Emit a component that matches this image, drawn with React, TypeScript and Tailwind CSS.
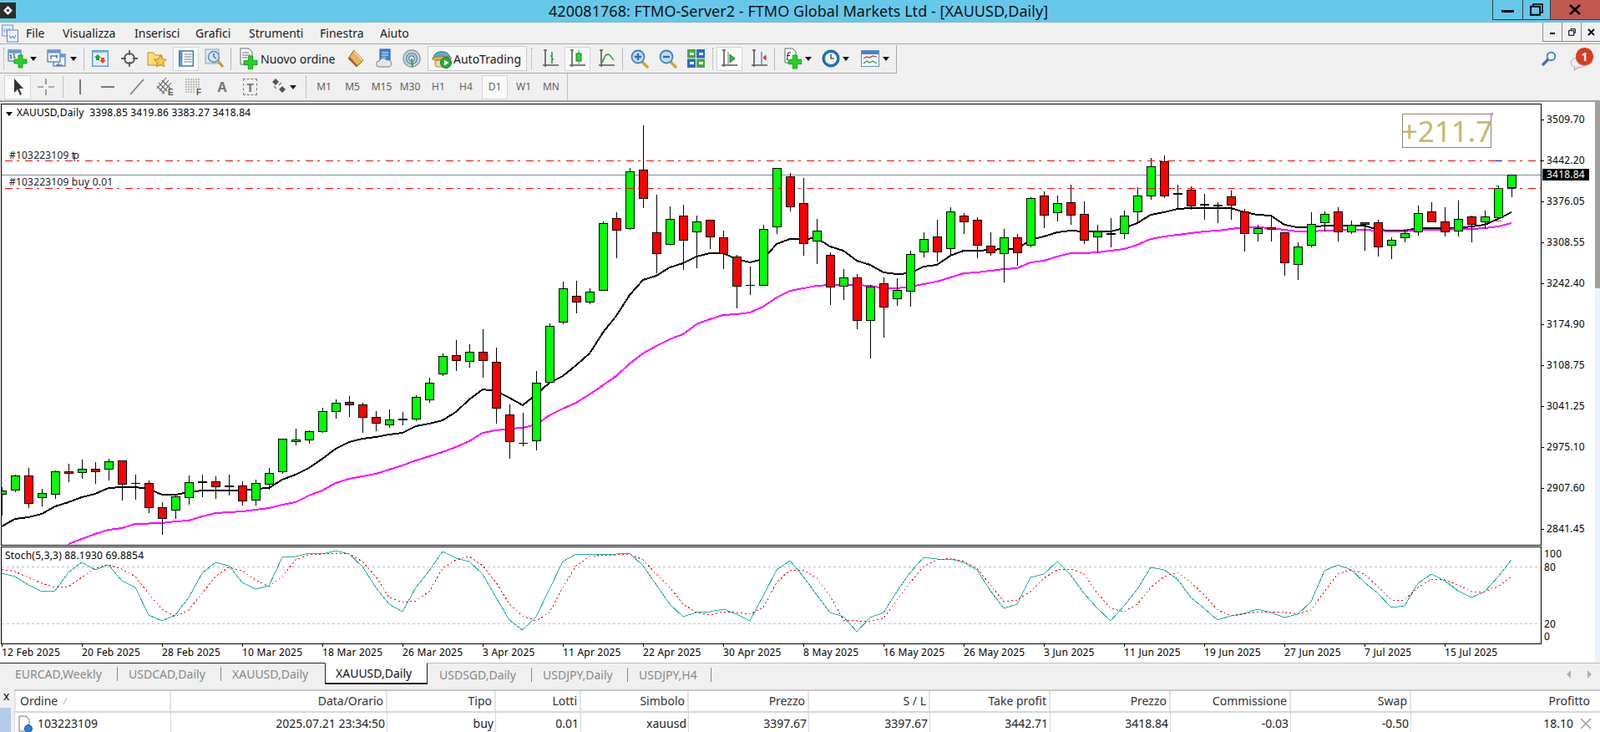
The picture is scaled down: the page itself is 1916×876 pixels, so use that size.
import React from "react";

type K = [string, number, number, number, number];
const candles: K[] = [
  ["g",587,592,583,617],["g",569,587,568,589],["r",569,603,560,608],["g",590,596,585,606],["g",564,592,563,597],["r",564,567,555,577],["g",561,566,550,573],["r",561,565,553,579],
  ["g",552,562,549,575],["r",551,580,551,599],["d",578,579,568,598],["r",578,608,575,614],["r",607,621,601,640],["g",594,611,592,621],["g",577,596,569,604],["d",576,578,568,595],
  ["r",576,583,570,597],["d",581,583,568,593],["r",581,600,576,605],["g",578,599,574,605],["g",566,580,560,586],["g",525,565,525,567],["g",526,529,513,533],["g",516,527,515,531],
  ["g",492,517,488,518],["g",482,493,478,501],["r",481,485,474,499],["r",484,500,482,518],["r",499,507,492,516],["g",502,509,490,512],["d",501,503,493,509],["g",475,502,473,504],
  ["g",458,479,452,482],["g",426,448,423,450],["r",425,432,407,444],["g",421,433,412,440],["r",421,432,394,452],["r",433,489,416,507],["r",496,529,484,549],["d",530,531,494,534],
  ["g",458,528,444,539],["g",390,458,387,459],["g",345,386,337,388],["r",354,362,336,375],["g",349,362,345,364],["g",267,348,265,348],["r",261,276,254,309],["g",205,274,201,275],
  ["r",203,238,150,249],["r",278,304,233,327],["g",262,293,247,294],["r",258,288,245,323],["g",265,278,258,321],["r",263,284,263,298],["r",284,304,276,322],["r",307,343,305,369],
  ["d",341,342,319,353],["g",274,342,269,342],["g",201,272,201,280],["r",211,248,207,253],["r",243,292,213,306],["g",276,289,262,316],["r",305,344,302,365],["g",332,343,322,359],
  ["r",332,384,328,394],["g",343,384,341,429],["r",339,368,332,404],["g",347,358,333,366],["g",304,349,300,367],["g",286,302,278,308],["r",283,302,263,313],["g",253,298,248,306],
  ["r",258,266,255,280],["r",263,294,260,309],["r",294,303,278,306],["g",284,304,274,338],["r",284,303,280,318],["g",237,294,236,296],["r",234,258,229,273],["g",243,255,234,265],
  ["r",242,258,221,269],["r",256,288,241,292],["g",277,284,269,302],["d",279,281,261,296],["g",258,280,252,286],["g",234,254,224,267],["g",199,235,189,239],["r",193,235,186,237],
  ["d",231,233,221,249],["r",227,247,223,251],["d",244,246,232,263],["d",245,247,242,267],["r",235,246,228,263],["r",253,280,250,301],["g",273,280,269,289],["r",272,275,260,289],
  ["r",278,315,278,330],["g",295,317,290,335],["g",268,294,254,296],["g",256,267,253,277],["r",253,278,248,289],["g",269,278,264,280],["r",266,269,266,300],["r",266,296,263,307],
  ["g",287,294,284,310],["g",279,285,274,290],["g",255,278,246,282],["r",253,266,242,266],["r",265,278,248,283],["g",262,277,240,283],["r",259,269,258,290],["g",259,266,252,273],
  ["g",225,261,222,262],["g",209,225,209,236],
];
const black = [630,621,619,615,606,601,595,591,584,583,583,585,592,592,589,587,587,587,587,585,584,574,568,560,549,537,529,525,523,520,518,510,507,503,493,478,466,468,476,485,472,458,450,437,423,398,378,353,335,330,320,315,307,303,303,310,314,310,292,286,286,285,295,300,312,317,326,328,327,319,317,306,300,300,299,298,298,287,283,278,276,277,277,277,273,267,257,254,250,249,249,249,249,254,257,258,269,272,272,270,270,270,270,275,276,276,273,273,273,273,271,269,262,254];
const magenta = [651,645,639,634,632,627,626.5,626,624,623,618,614,613,612,610,608,604,601,593,587,578,573,570,567,562,557,551,546,541,535,528,518,515,513,512,508,497,489,482,472,461,450,435,423,414,406,400,388,382,377,376,374,367,356,348,345,342,341,341,341,342,345,345,343,340,337,332,327,326,324,322,321,314,312,307,303,303,302,300,298,293,286,283,281,279,277,276,274,272,272,273,275,277,277,276,275.5,275,275,276,277,277,275,275,275,274,274,273,271,267];
const teal = [686,690,700,708,707,685,673,682,676,695,703,736,743,736,715,686,673,677,697,705,701,667,666,662,663,659,663,678,703,723,732,703,683,660,668,672,687,715,742,754,738,705,672,663,664,663,663,662,677,700,723,738,733,732,729,735,743,713,682,671,690,712,733,738,756,739,733,708,685,667,669,669,673,682,707,728,723,691,687,672,688,710,728,743,725,705,679,682,693,715,728,742,737,734,729,733,739,735,720,683,676,682,697,710,727,725,698,687,695,707,715,708,690,670];
const redS = [681,684,691,698,703,702,691,680,676,681,690,710,729,738,730,710,690,679,683,694,702,690,670,664,663,662,663,672,690,715,721,719,708,680,670,666,677,697,723,737,743,733,703,677,666,664,664,663,670,687,703,723,733,736,732,733,735,727,697,682,682,692,713,742,743,743,740,718,697,678,670,668,672,680,700,720,718,708,692,682,681,687,710,728,732,723,703,690,685,697,712,730,737,735,732,732,733,735,730,708,687,682,687,702,718,718,703,693,694,700,708,708,702,690];
const pts = (a: number[], from = 0) => a.map((y, i) => `${2 + 16 * (i + from)},${y}`).join(" ");
const axis = ["3509.70","3442.20","3376.05","3308.55","3242.40","3174.90","3108.75","3041.25","2975.10","2907.60","2841.45"];
const dates = ["12 Feb 2025","20 Feb 2025","28 Feb 2025","10 Mar 2025","18 Mar 2025","26 Mar 2025","3 Apr 2025","11 Apr 2025","22 Apr 2025","30 Apr 2025","8 May 2025","16 May 2025","26 May 2025","3 Jun 2025","11 Jun 2025","19 Jun 2025","27 Jun 2025","7 Jul 2025","15 Jul 2025"];
const dj = "font-['Open_Sans',sans-serif] text-[12px] tracking-[0.2px] leading-[14px]";

const Caret = ({ c = "" }: { c?: string }) => (
  <svg width="8" height="5" viewBox="0 0 8 5" className={c}><path d="M0 0h8L4 5z" fill="#111" /></svg>
);
const Plus = ({ x, y, s = 12 }: { x: number; y: number; s?: number }) => (
  <path d={`M${x + s / 3} ${y}h${s / 3}v${s / 3}h${s / 3}v${s / 3}h${-s / 3}v${s / 3}h${-s / 3}v${-s / 3}h${-s / 3}v${-s / 3}h${s / 3}z`} fill="#22d322" stroke="#128a12" strokeWidth="0.8" />
);
const Axes = ({ children }: { children?: React.ReactNode }) => (
  <svg width="20" height="24" viewBox="0 0 20 24">
    <path d="M3 2v18M0 20h19M5 2H1M3 22v-2" stroke="#5a5a5a" strokeWidth="1.6" fill="none" />
    {children}
  </svg>
);
const Win = ({ x, y, w, h }: { x: number; y: number; w: number; h: number }) => (
  <g>
    <rect x={x} y={y} width={w} height={h} fill="#eef5fc" stroke="#3f78b8" strokeWidth="1.2" />
    <rect x={x + 0.6} y={y + 0.6} width={w - 1.2} height="3" fill="#5a96d6" />
  </g>
);

const NewChart = () => (
  <svg width="24" height="24" viewBox="0 0 24 24">
    <Win x={1} y={2} w={15} h={13} />
    <path d="M4 7v6M2.5 8.5H4M4 11h1.5M8 6v6M6.5 7H8M8 10.5h1.5" stroke="#446" strokeWidth="1" fill="none" />
    <Plus x={8} y={8} s={15} />
  </svg>
);
const Profiles = () => (
  <svg width="24" height="24" viewBox="0 0 24 24">
    <Win x={8} y={7} w={14} h={14} />
    <Win x={1} y={2} w={15} h={14} />
    <path d="M4 9h9M5 9v4M12 8v4M11 20h8M14 17v3" stroke="#446" strokeWidth="1" fill="none" />
  </svg>
);
const Market = () => (
  <svg width="20" height="24" viewBox="0 0 20 24">
    <rect x="0.7" y="2.7" width="18.6" height="18.6" fill="#e6f1fb" stroke="#5e9ad8" strokeWidth="1.4" />
    <rect x="1" y="3" width="18" height="2" fill="#7fb4e6" />
    <path d="M7 7l4 4H9v3H5v-3H3z" fill="#1fa52b" />
    <path d="M13 18l-4-4h2v-3h4v3h2z" fill="#e2502e" />
  </svg>
);
const Nav = () => (
  <svg width="20" height="24" viewBox="0 0 20 24">
    <circle cx="10" cy="12" r="6" fill="#eee" stroke="#5a5a5a" strokeWidth="1.8" />
    <path d="M10 2v6M10 16v6M0 12h6M14 12h6" stroke="#5a5a5a" strokeWidth="1.8" />
  </svg>
);
const Folder = () => (
  <svg width="24" height="24" viewBox="0 0 24 24">
    <path d="M1 5h7l2 3h8v12H1z" fill="#fbdc7c" stroke="#b8912c" />
    <path d="M16 8l2.3 4.6 5 .7-3.6 3.5.9 5-4.6-2.4-4.6 2.4.9-5-3.6-3.5 5-.7z" fill="#f6c945" stroke="#a07a18" strokeWidth="0.8" />
  </svg>
);
const Terminal = () => (
  <svg width="18" height="24" viewBox="0 0 18 24">
    <rect x="0.7" y="3" width="16.6" height="18" fill="#fff" stroke="#2f6fb5" strokeWidth="1.4" />
    <rect x="1" y="3.5" width="3.5" height="17" fill="#5d9ad6" />
    <path d="M6.5 7h9M6.5 10h9M6.5 13h9M6.5 16h9" stroke="#6a7684" strokeWidth="1" />
    <path d="M2 7h2M2 10h2M2 13h2" stroke="#d2332a" strokeWidth="1" />
  </svg>
);
const Tester = () => (
  <svg width="24" height="26" viewBox="0 0 24 26">
    <rect x="1" y="2" width="16" height="17" fill="#dce7f2" stroke="#8aa2b8" />
    <circle cx="11" cy="11" r="6.5" fill="#cfe3f5" stroke="#5d88ad" strokeWidth="1.4" />
    <path d="M11 7v4l3 2" stroke="#234" strokeWidth="1" fill="none" />
    <path d="M16 16l6 7" stroke="#c59a2e" strokeWidth="3" />
  </svg>
);
const NewOrder = () => (
  <svg width="22" height="26" viewBox="0 0 22 26">
    <path d="M1 1h10l4 4v15H1z" fill="#fff" stroke="#666" />
    <path d="M3 6h8M3 9h10M3 12h6" stroke="#666" strokeWidth="1" />
    <Plus x={5} y={10} s={16} />
  </svg>
);
const Book = () => (
  <svg width="22" height="24" viewBox="0 0 22 24">
    <path d="M9 2l11 12-8 8L2 12z" fill="#e9b45a" stroke="#8a5a1c" />
    <path d="M2 12l10 10 1-2L4 10z" fill="#a8692a" />
    <path d="M9 3l10 11" stroke="#f6dfa8" strokeWidth="1.5" />
  </svg>
);
const CloudI = () => (
  <svg width="20" height="24" viewBox="0 0 20 24">
    <rect x="5" y="1" width="12" height="14" fill="#3d86d6" stroke="#1d5ba0" />
    <path d="M7 5h8M7 8h8M7 11h5" stroke="#d8ecff" strokeWidth="1.2" />
    <path d="M4 22a3.5 3.5 0 0 1 0-7 5 5 0 0 1 9-1 4 4 0 0 1 3 8z" fill="#e6e6e6" stroke="#777" />
  </svg>
);
const Signal = () => (
  <svg width="22" height="24" viewBox="0 0 22 24">
    <circle cx="11" cy="12" r="10" fill="#d4dde4" stroke="#8b98a3" strokeWidth="1.4" />
    <circle cx="11" cy="12" r="6.6" fill="#b8c9d8" stroke="#5e8fb8" strokeWidth="1.4" />
    <circle cx="11" cy="12" r="3.2" fill="#eef4f9" stroke="#4f7da5" strokeWidth="1.2" />
    <path d="M11 12l1 10" stroke="#3aa042" strokeWidth="2" />
  </svg>
);
const Auto = () => (
  <svg width="24" height="26" viewBox="0 0 24 26">
    <path d="M2 12c1-9 17-10 20-1z" fill="#5fa4dc" stroke="#2e6ea8" />
    <path d="M0 13c6-3 18-3 24-1l-2 3H2z" fill="#e8b73a" stroke="#96731c" strokeWidth="0.8" />
    <rect x="4" y="15" width="12" height="8" rx="3" fill="#f0d8a8" stroke="#96731c" strokeWidth="0.8" />
    <circle cx="17" cy="18" r="6.5" fill="#1fb03a" stroke="#0d7a22" />
    <path d="M15 14.5l5.5 3.5-5.5 3.5z" fill="#fff" />
  </svg>
);
const ZoomI = ({ minus }: { minus?: boolean }) => (
  <svg width="22" height="24" viewBox="0 0 22 24">
    <path d="M13 15l7 7" stroke="#d2a72e" strokeWidth="3.6" strokeLinecap="round" />
    <circle cx="9" cy="10" r="7.5" fill="#bcdcf5" stroke="#3f82bd" strokeWidth="1.8" />
    <path d={minus ? "M5 10h8" : "M5 10h8M9 6v8"} stroke="#2f6fa8" strokeWidth="2.4" />
  </svg>
);
const Tile = () => (
  <svg width="21" height="22" viewBox="0 0 21 22">
    <rect x="0" y="0" width="10" height="10.5" fill="#49a844" />
    <rect x="11" y="0" width="10" height="10.5" fill="#2d66c8" />
    <rect x="0" y="11.5" width="10" height="10.5" fill="#2d66c8" />
    <rect x="11" y="11.5" width="10" height="10.5" fill="#49a844" />
    <path d="M3 4h5v3H3zM14 4h5v3h-5zM3 15h5v3H3zM14 15h5v3h-5z" fill="#e8f4ea" />
  </svg>
);
const Indic = () => (
  <svg width="22" height="26" viewBox="0 0 22 26">
    <path d="M2 1h9l4 4v13H2z" fill="#fff" stroke="#666" />
    <path d="M9 6H7c-1 0-1.4.7-1.6 2l-1 7M4 9.5h4" stroke="#222" strokeWidth="1.1" fill="none" />
    <Plus x={6} y={9} s={16} />
  </svg>
);
const Clock = () => (
  <svg width="22" height="24" viewBox="0 0 22 24">
    <circle cx="11" cy="12" r="10" fill="#2474c4" stroke="#14508e" />
    <circle cx="11" cy="12" r="7" fill="#f2f6fa" />
    <path d="M11 7v5h4" stroke="#223" strokeWidth="1.2" fill="none" />
  </svg>
);
const Tmpl = () => (
  <svg width="22" height="22" viewBox="0 0 22 22">
    <rect x="0.5" y="1.5" width="21" height="19" fill="#f3f8fc" stroke="#5d8fc0" />
    <rect x="1" y="2" width="20" height="4" fill="#3f84c8" />
    <path d="M3 11l4-2 3 1 4-2 5 1" stroke="#c0392b" strokeWidth="1.2" fill="none" />
    <path d="M3 17l4-3 3 2 4-2 5 3" stroke="#2e9e44" strokeWidth="1.2" fill="none" />
  </svg>
);
const Search = () => (
  <svg width="18" height="18" viewBox="0 0 18 18">
    <path d="M8 10l-6 6" stroke="#3d6dc0" strokeWidth="3.2" strokeLinecap="round" />
    <circle cx="11.5" cy="6.5" r="4.8" fill="#fff" stroke="#4a83d0" strokeWidth="2" />
  </svg>
);

const Dots = ({ c }: { c: string }) => <div className={`w-[2px] h-[26px] border-l border-dotted border-[#999] ${c}`} />;
const Sep = ({ c }: { c: string }) => <div className={`w-px h-[27px] bg-[#b8b8b8] ${c}`} />;
const Pressed = ({ c, children }: { c: string; children: React.ReactNode }) => (
  <div className={`h-[29px] w-[31px] flex items-center justify-center bg-[#fafafa] border border-[#d4d4d4] ${c}`}>{children}</div>
);
const TF = ({ t, c }: { t: string; c: string }) => (
  <span className={`text-[#5f5f5f] text-center font-['Open_Sans',sans-serif] text-[12px] ${c}`}>{t}</span>
);

const tabs = [
  { t: "EURCAD,Weekly", c: "pl-[18px] w-[141px] border-r" },
  { t: "USDCAD,Daily", c: "pl-[13px] w-[124px] border-r" },
  { t: "XAUUSD,Daily", c: "pl-[13px] w-[124px]" },
];
const tabs2 = [
  { t: "USDSGD,Daily", c: "pl-[14px] w-[125px] border-r" },
  { t: "USDJPY,Daily", c: "pl-[13px] w-[115px] border-r" },
  { t: "USDJPY,H4", c: "pl-[13px] w-[100px] border-r" },
];
const headers = ["Data/Orario","Tipo","Lotti","Simbolo","Prezzo","S / L","Take profit","Prezzo","Commissione","Swap"];
const values = ["2025.07.21 23:34:50","buy","0.01","xauusd","3397.67","3397.67","3442.71","3418.84","-0.03","-0.50"];
const grid = "grid grid-cols-[188px_259px_130px_102px_129px_144px_145px_144px_144px_144px_144px_226px]";

export default function App() {
  return (
    <div className="w-[1916px] h-[876px] overflow-hidden flex flex-col bg-[#f0f0f0] text-[#1a1a1a] font-['Open_Sans',sans-serif]">
      {/* Title bar */}
      <div className="h-[27px] shrink-0 flex items-start bg-[#65c8eb] border-b border-[#8ab4c8]">
        <div className="mt-[3px] w-[19px] h-[19px] bg-[#2b2b2b] flex items-center justify-center">
          <svg width="11" height="11" viewBox="0 0 11 11"><path d="M5.5 0L11 5.5 5.5 11 0 5.5z" fill="#fff" /><path d="M5.5 3.5l2 2-2 2-2-2z" fill="#2b2b2b" /></svg>
        </div>
        <span className="ml-[638px] w-[600px] text-[18px] tracking-[0.04px] leading-[26px] whitespace-nowrap text-[#111]">420081768: FTMO-Server2 - FTMO Global Markets Ltd - [XAUUSD,Daily]</span>
        <div className="ml-auto flex h-[24px] border-l border-b border-[#2f3e46]">
          <div className="w-[36px] flex items-center justify-center border-r border-[#2f3e46]"><div className="w-[15px] h-[3px] mt-[3px] bg-black" /></div>
          <div className="w-[33px] flex items-center justify-center border-r border-[#2f3e46]">
            <svg width="16" height="15" viewBox="0 0 16 15"><path d="M4 3V1h11v10h-3" fill="none" stroke="#000" strokeWidth="1.6" /><rect x="1" y="3.8" width="11" height="10" fill="none" stroke="#000" strokeWidth="2" /></svg>
          </div>
          <div className="w-[59px] flex items-center justify-center bg-[#c0584f] border-r border-[#c0584f]">
            <svg width="14" height="13" viewBox="0 0 14 13"><path d="M1 1l12 11M13 1L1 12" stroke="#000" strokeWidth="2.6" /></svg>
          </div>
        </div>
      </div>
      {/* Menu */}
      <div className="h-[26px] shrink-0 flex items-center border-b border-[#a8a8a8] text-[14px]">
        <svg width="20" height="22" viewBox="0 0 20 22" className="ml-[2px]">
          <rect x="0.5" y="1" width="13" height="13" fill="#dfeafa" stroke="#6f93cc" />
          <rect x="6.5" y="7" width="13" height="14" fill="#eef4fd" stroke="#5b85c4" />
          <path d="M9 13l2 4 2-3 2 3 2-4" stroke="#4f7cc0" strokeWidth="1" fill="none" />
          <path d="M3 5v5M6 5v5M9 5v2" stroke="#6f93cc" strokeWidth="1" />
        </svg>
        <span className="ml-[9px] w-[44px]">File</span>
        <span className="w-[86px]">Visualizza</span>
        <span className="w-[73px]">Inserisci</span>
        <span className="w-[64px]">Grafici</span>
        <span className="w-[85px]">Strumenti</span>
        <span className="w-[72px]">Finestra</span>
        <span>Aiuto</span>
        <div className="ml-auto flex h-[23px] self-start border-l border-b border-[#8a8a8a]">
          <div className="w-[23px] flex items-center justify-center border-r border-[#8a8a8a]"><div className="w-[6px] h-[2px] mt-[3px] bg-black" /></div>
          <div className="w-[23px] flex items-center justify-center border-r border-[#8a8a8a]">
            <svg width="9" height="9" viewBox="0 0 9 9"><path d="M3 2V.7h5.3v4.6H7" fill="none" stroke="#000" /><rect x="0.7" y="2.7" width="6" height="5.6" fill="none" stroke="#000" /></svg>
          </div>
          <div className="w-[22px] flex items-center justify-center">
            <svg width="9" height="9" viewBox="0 0 9 9"><path d="M1 1l7 7M8 1L1 8" stroke="#000" strokeWidth="1.8" /></svg>
          </div>
        </div>
      </div>
      {/* Toolbar 1 */}
      <div className="h-[35px] shrink-0 flex items-center relative">
        <div className="flex items-center h-[34px] w-[1074px] shrink-0 border-r border-b border-[#a8a8a8]">
          <Dots c="ml-[4px]" />
          <div className="ml-[3px]"><NewChart /></div>
          <Caret c="ml-[3px]" />
          <div className="ml-[12px]"><Profiles /></div>
          <Caret c="ml-[4px]" />
          <Sep c="ml-[8px]" />
          <div className="ml-[9px]"><Market /></div>
          <div className="ml-[15px]"><Nav /></div>
          <div className="ml-[11px]"><Folder /></div>
          <Pressed c="ml-[7px]"><Terminal /></Pressed>
          <div className="ml-[7px]"><Tester /></div>
          <Sep c="ml-[7px]" />
          <div className="ml-[10px]"><NewOrder /></div>
          <span className="ml-[3px] w-[92px] text-[14px] whitespace-nowrap">Nuovo ordine</span>
          <div className="ml-[11px]"><Book /></div>
          <div className="ml-[13px]"><CloudI /></div>
          <div className="ml-[12px]"><Signal /></div>
          <div className="ml-[8px] w-[119px] h-[30px] flex items-center bg-[#f7f7f7] border border-[#c8c8c8] pl-[4px] shrink-0">
            <Auto />
            <span className="ml-[2px] text-[14px] whitespace-nowrap">AutoTrading</span>
          </div>
          <Dots c="ml-[5px]" />
          <div className="ml-[12px]">
            <Axes><path d="M11 4v14M9 9h2M11 13h2" stroke="#2ca02c" strokeWidth="1.6" fill="none" /></Axes>
          </div>
          <Pressed c="ml-[6px]">
            <Axes><path d="M11 2v17" stroke="#2a6" strokeWidth="1" /><rect x="8" y="6" width="6" height="9" fill="#33d633" stroke="#1a7a1a" /></Axes>
          </Pressed>
          <div className="ml-[10px]">
            <Axes><path d="M4 17c3-7 4-10 7-10s4 4 7 7" stroke="#3a9a44" strokeWidth="1.6" fill="none" /></Axes>
          </div>
          <Sep c="ml-[8px]" />
          <div className="ml-[9px]"><ZoomI /></div>
          <div className="ml-[12px]"><ZoomI minus /></div>
          <div className="ml-[12px]"><Tile /></div>
          <Dots c="ml-[9px]" />
          <Pressed c="ml-[3px]">
            <Axes><path d="M10 7l6 5-6 5z" fill="#37b24a" stroke="#228a33" /><path d="M8 4v16" stroke="#777" strokeWidth="1" /></Axes>
          </Pressed>
          <div className="ml-[11px]">
            <Axes><path d="M12 4v16" stroke="#4a88c8" strokeWidth="1.4" /><path d="M18 11h-4M14 11l3-3v6z" fill="#d2442a" stroke="#d2442a" /></Axes>
          </div>
          <Sep c="ml-[7px]" />
          <div className="ml-[10px]"><Indic /></div>
          <Caret c="ml-[4px]" />
          <div className="ml-[12px]"><Clock /></div>
          <Caret c="ml-[3px]" />
          <div className="ml-[14px]"><Tmpl /></div>
          <Caret c="ml-[4px]" />
        </div>
        <div className="absolute left-[1846px] top-[8px]"><Search /></div>
        <svg width="26" height="24" viewBox="0 0 26 24" className="absolute left-[1879px] top-[8px]">
          <ellipse cx="11" cy="14" rx="9" ry="6" fill="#eee" stroke="#aaa" />
          <path d="M7 19l-1 4 5-3" fill="#eee" stroke="#aaa" />
        </svg>
        <div className="absolute left-[1887px] top-[4px] w-[21px] h-[21px] rounded-full bg-[#dc3a1e] text-white text-[14px] font-bold leading-[21px] text-center shadow-[0_1px_1px_#999]">1</div>
      </div>
      {/* Toolbar 2 */}
      <div className="h-[34px] shrink-0 flex items-center border-b-2 border-[#a0a0a0]">
        <div className="flex items-center h-[32px] w-[680px] shrink-0 border-r border-[#c0c0c0]">
          <Pressed c="ml-[5px] w-[32px]">
            <svg width="14" height="22" viewBox="0 0 14 22"><path d="M3 1v17l4-4 3 7 2-1-3-7h5z" fill="#333" /></svg>
          </Pressed>
          <svg width="20" height="20" viewBox="0 0 20 20" className="ml-[8px]"><path d="M10 0v7M10 13v7M0 10h7M13 10h7" stroke="#666" strokeWidth="1.2" /></svg>
          <div className="w-px h-[26px] bg-[#c0c0c0] ml-[10px]" />
          <div className="w-[2px] h-[18px] bg-[#777] ml-[19px]" />
          <div className="w-[16px] h-[2px] bg-[#777] ml-[24px]" />
          <svg width="18" height="20" viewBox="0 0 18 20" className="ml-[18px]"><path d="M1 19L17 1" stroke="#777" strokeWidth="1.5" /></svg>
          <svg width="22" height="24" viewBox="0 0 22 24" className="ml-[14px]">
            <path d="M1 14L12 1M4 17L15 4M7 20L18 7M3 7l10 10M1 11l9 9M7 4l10 10" stroke="#666" strokeWidth="1.1" />
            <text x="14" y="22" fontSize="10" fontWeight="700" fill="#555" fontFamily="Liberation Sans">E</text>
          </svg>
          <svg width="20" height="24" viewBox="0 0 20 24" className="ml-[13px]">
            <path d="M0 3h17M0 6h17M0 9h17M0 12h17M0 15h12M0 18h12" stroke="#888" strokeWidth="1" strokeDasharray="2 1" />
            <text x="13" y="22" fontSize="10" fontWeight="700" fill="#555" fontFamily="Liberation Sans">F</text>
          </svg>
          <span className="ml-[18px] w-[12px] text-[16px] font-bold text-[#777] text-center font-['Liberation_Sans',sans-serif]">A</span>
          <div className="ml-[19px] w-[17px] h-[20px] border border-dashed border-[#777] flex items-center justify-center text-[15px] font-bold text-[#777] font-['Liberation_Sans',sans-serif]">T</div>
          <svg width="20" height="20" viewBox="0 0 20 20" className="ml-[16px]">
            <path d="M6 0l4 4-4 4-4-4z" fill="#555" /><path d="M14 9l4 4-4 4-4-4z" fill="#555" /><path d="M4 9l3 3M13 5l-3 3" stroke="#777" strokeWidth="1.2" />
          </svg>
          <Caret c="ml-[3px]" />
          <Dots c="ml-[11px]" />
          <TF t="M1" c="ml-[9px] w-[22px]" />
          <TF t="M5" c="ml-[12px] w-[22px]" />
          <TF t="M15" c="ml-[11px] w-[26px]" />
          <TF t="M30" c="ml-[8px] w-[26px]" />
          <TF t="H1" c="ml-[10px] w-[22px]" />
          <TF t="H4" c="ml-[11px] w-[22px]" />
          <Pressed c="ml-[8px]"><TF t="D1" c="w-[20px]" /></Pressed>
          <TF t="W1" c="ml-[7px] w-[24px]" />
          <TF t="MN" c="ml-[9px] w-[24px]" />
        </div>
      </div>
      {/* Chart area */}
      <div className="h-[671px] shrink-0 bg-white flex relative">
        <div className="w-[1846px] shrink-0 pt-[2px] pl-px flex flex-col">
          <div className="relative h-[530px] border border-black overflow-hidden">
            <svg width="1843" height="528" viewBox="2 125 1843 528" className="absolute left-0 top-0">
              <polyline points={pts(black)} fill="none" stroke="#000" strokeWidth="2" shapeRendering="crispEdges" />
              <polyline points={pts(magenta, 5)} fill="none" stroke="#ff00ff" strokeWidth="2" shapeRendering="crispEdges" />
              <path d="M2 209.5H1845" stroke="#7f8a99" strokeWidth="1" shapeRendering="crispEdges" />
              <g shapeRendering="crispEdges">
                {candles.map(([k, t, b, wt, wb], i) => {
                  const c = 2 + 16 * i;
                  return (
                    <g key={i}>
                      <path d={`M${c + 0.5} ${wt}V${wb}`} stroke="#000" strokeWidth="1" />
                      {k === "d" ? (
                        <rect x={c - 5} y={t} width="11" height={b - t} fill="#000" />
                      ) : (
                        <rect x={c - 4.5} y={t + 0.5} width="10" height={b - t - 1} fill={k === "g" ? "#00ff00" : "#ff0000"} stroke="#000" strokeWidth="1" />
                      )}
                    </g>
                  );
                })}
              </g>
              <g shapeRendering="crispEdges" fill="none" strokeWidth="1">
                <path d="M6 192.5H1845M6 225.5H1845" stroke="#ff0000" strokeDasharray="9 5 3 7" />
                <path d="M1791 192.5h7" stroke="#0000ff" />
                <path d="M1805 225.5h10" stroke="#000080" />
                <path d="M1791 222.5h3M1792.5 221v3" stroke="#00dddd" />
                <path d="M1790 264.5h8" stroke="#ff3030" />
              </g>
            </svg>
            <svg width="8" height="5" viewBox="0 0 8 5" className="absolute left-[5px] top-[9px]"><path d="M0 0h8L4 5z" fill="#000" /></svg>
            <span className={`absolute left-[18px] top-[3px] whitespace-pre text-black ${dj}`}>XAUUSD,Daily  3398.85 3419.86 3383.27 3418.84</span>
            <span className={`absolute left-[9px] top-[54px] whitespace-pre text-[#222] ${dj}`}>#103223109 t<span className="-ml-[3px]">p</span></span>
            <span className={`absolute left-[9px] top-[86px] whitespace-pre text-[#222] ${dj}`}>#103223109 buy 0.01</span>
            <div className="absolute left-[1677px] top-[11px] w-[107px] h-[41px] border border-[#8f8270] flex items-center justify-center text-[#c4b96f] text-[35px] leading-[38px] font-['Liberation_Sans',sans-serif]">+211.7</div>
            <div className="absolute left-[1783px] top-[10px] w-[3px] h-[3px] border border-[#cc66ee]" />
          </div>
          <div className="relative h-[117px] mt-px border border-black overflow-hidden">
            <svg width="1843" height="115" viewBox="2 655 1843 115" className="absolute left-0 top-0">
              <path d="M2 678.5H1845M2 746.5H1845" stroke="#c0c0c0" strokeDasharray="3 3" shapeRendering="crispEdges" />
              <polyline points={pts(teal)} fill="none" stroke="#20b2aa" strokeWidth="1" shapeRendering="crispEdges" />
              <polyline points={pts(redS)} fill="none" stroke="#ff0000" strokeWidth="1" strokeDasharray="2 3" shapeRendering="crispEdges" />
            </svg>
            <span className={`absolute left-[4px] top-[3px] whitespace-pre text-black ${dj}`}>Stoch(5,3,3) 88.1930 69.8854</span>
          </div>
          <div className="relative h-[22px]">
            {dates.map((d, i) => (
              <React.Fragment key={d}>
                <div className="absolute top-0 w-px h-[3px] bg-black" style={{ left: 1 + 96 * i }} />
                <span className={`absolute top-[3px] whitespace-pre text-black ${dj}`} style={{ left: 1 + 96 * i }}>{d}</span>
              </React.Fragment>
            ))}
          </div>
        </div>
        <div className="w-[64px] shrink-0 relative">
          {axis.map((a, i) => (
            <React.Fragment key={a}>
              <div className="absolute left-0 w-[3px] h-px bg-black" style={{ top: 21 + 49 * i }} />
              <span className={`absolute left-[6px] text-black ${dj}`} style={{ top: 14 + 49 * i }}>{a}</span>
            </React.Fragment>
          ))}
          <div className={`absolute left-[1px] top-[80px] w-[56px] h-[14px] pl-[5px] bg-black text-white ${dj}`}>3418.84</div>
          {[["100", 534], ["80", 550], ["20", 618], ["0", 633]].map(([t, y]) => (
            <span key={t} className={`absolute left-[3px] text-black ${dj}`} style={{ top: Number(y) }}>{t}</span>
          ))}
        </div>
        <div className="w-[6px] shrink-0 flex flex-col">
          <div className="h-[223px] bg-[#a0a0a0]" />
          <div className="flex-1 bg-[#edf3fd]" />
        </div>
      </div>
      {/* Tabs */}
      <div className="h-[28px] shrink-0 flex items-start text-[14px] text-[#888] border-t border-[#bdbdbd]">
        <div className="flex h-[25px] w-[389px] shrink-0 items-center border-t border-[#222] -mt-px pt-[1px]">
          {tabs.map(t => (
            <span key={t.t} className={`${t.c} h-[17px] leading-[17px] border-[#888] whitespace-nowrap`}>{t.t}</span>
          ))}
        </div>
        <div className="w-[123px] h-[26px] -mt-px border-x border-b-2 border-t border-[#222] border-t-white bg-white text-[#111] leading-[24px] pl-[12px] whitespace-nowrap">XAUUSD,Daily</div>
        {tabs2.map(t => (
          <span key={t.t} className={`${t.c} mt-[5px] h-[17px] leading-[17px] border-[#888] whitespace-nowrap`}>{t.t}</span>
        ))}
        <div className="ml-auto mr-[10px] mt-[8px] flex gap-[18px]">
          <svg width="6" height="10" viewBox="0 0 6 10"><path d="M5 0v10L0 5z" fill="#b0b0b0" /></svg>
          <svg width="6" height="10" viewBox="0 0 6 10"><path d="M1 0v10l5-5z" fill="#b0b0b0" /></svg>
        </div>
      </div>
      {/* Terminal */}
      <div className="flex-1 flex mt-[4px] text-[14px] text-[#222] leading-[24px]">
        <div className="w-[17px] shrink-0 flex flex-col">
          <div className="h-[18px] leading-[14px] mt-[1px] pl-[4px] text-[#111]">x</div>
          <div className="flex-1 mt-[3px] mr-[4px] bg-[#b4cce8]" />
        </div>
        <div className="flex-1 border-t-2 border-[#c8c8c8] bg-white">
          <div className={`${grid} h-[26px] border-b-[2px] border-[#d8d8d8] text-[#333]`}>
            <div className="pl-[5px] border-x-2 border-[#e4e4e4] flex items-center gap-[8px]">Ordine <span className="text-[10px] text-[#999]">⁄</span></div>
            {headers.map((h, i) => (
              <div key={i} className="text-right pr-[3px] border-r-2 border-[#e4e4e4]">{h}</div>
            ))}
            <div className="text-right pr-[12px]">Profitto</div>
          </div>
          <div className={`${grid} h-[22px] leading-[26px]`}>
            <div className="pl-[4px] border-l border-r border-[#d8d8d8] flex items-center gap-[6px]">
              <svg width="17" height="21" viewBox="0 0 17 21"><path d="M1 1h8l4 4v14H1z" fill="#fff" stroke="#777" /><circle cx="12" cy="16" r="4.5" fill="#2a82d0" stroke="#15568f" /></svg>
              103223109
            </div>
            {values.map((v, i) => (
              <div key={i} className="text-right pr-[2px] border-r border-[#d8d8d8]">{v}</div>
            ))}
            <div className="flex justify-end items-center pr-[10px] gap-[8px]">
              18.10
              <svg width="14" height="14" viewBox="0 0 14 14"><path d="M1 1l12 12M13 1L1 13" stroke="#a0a0a0" strokeWidth="1.6" /></svg>
            </div>
          </div>
        </div>
      </div>
    </div>
  );
}
